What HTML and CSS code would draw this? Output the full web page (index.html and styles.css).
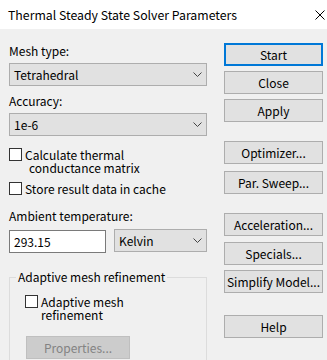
FILE: index.html
```html
<!DOCTYPE html>
<html lang="en">
<head>
    <meta charset="UTF-8">
    <meta name="viewport" content="width=device-width, initial-scale=1.0">
    <title>Thermal Steady State Solver Parameters</title>
    <link rel="stylesheet" href="styles.css">
</head>
<body>
    <div class="dialog">
        <div class="titlebar">
            <span class="title">Thermal Steady State Solver Parameters</span>
            <svg class="close-x" viewBox="0 0 10 10" width="10" height="10">
                <path d="M0.5 0.5 L9.5 9.5 M9.5 0.5 L0.5 9.5" stroke="#000" stroke-width="1" fill="none"/>
            </svg>
        </div>

        <div class="content">
            <div class="left">
                <div class="label first">Mesh type:</div>
                <div class="combo">
                    <span>Tetrahedral</span>
                    <svg class="chev" viewBox="0 0 9 5" width="9" height="5"><path d="M0.5 0.5 L4.5 4.5 L8.5 0.5" stroke="#444" fill="none"/></svg>
                </div>

                <div class="label">Accuracy:</div>
                <div class="combo">
                    <span>1e-6</span>
                    <svg class="chev" viewBox="0 0 9 5" width="9" height="5"><path d="M0.5 0.5 L4.5 4.5 L8.5 0.5" stroke="#444" fill="none"/></svg>
                </div>

                <div class="check-row calc">
                    <span class="box"></span>
                    <span class="check-text">Calculate thermal<br><span class="indent">conductance matrix</span></span>
                </div>

                <div class="check-row store">
                    <span class="box"></span>
                    <span class="check-text">Store result data in cache</span>
                </div>

                <div class="label ambient">Ambient temperature:</div>
                <div class="temp-row">
                    <div class="edit">293.15</div>
                    <div class="combo unit">
                        <span>Kelvin</span>
                        <svg class="chev" viewBox="0 0 9 5" width="9" height="5"><path d="M0.5 0.5 L4.5 4.5 L8.5 0.5" stroke="#444" fill="none"/></svg>
                    </div>
                </div>

                <fieldset class="group">
                    <legend>Adaptive mesh refinement</legend>
                    <div class="check-row adaptive">
                        <span class="box"></span>
                        <span class="check-text">Adaptive mesh<br>refinement</span>
                    </div>
                    <div class="btn disabled">Properties...</div>
                </fieldset>
            </div>

            <div class="right">
                <div class="btn default">Start</div>
                <div class="btn gap5">Close</div>
                <div class="btn gap5">Apply</div>
                <div class="btn gap19">Optimizer...</div>
                <div class="btn gap7">Par. Sweep...</div>
                <div class="btn gap19">Acceleration...</div>
                <div class="btn gap6">Specials...</div>
                <div class="btn gap5">Simplify Model...</div>
                <div class="btn gap22">Help</div>
            </div>
        </div>
    </div>
</body>
</html>
```

FILE: styles.css
```css
* {
    margin: 0;
    padding: 0;
    box-sizing: border-box;
}

body {
    font-family: "Noto Sans CJK SC", "Noto Sans", sans-serif;
    font-size: 12px;
    color: #000;
    background: #f0f0f0;
    width: 327px;
    height: 360px;
    overflow: hidden;
}

.dialog {
    width: 327px;
    height: 360px;
    background: #f0f0f0;
    overflow: hidden;
}

.titlebar {
    height: 29px;
    background: #fff;
    display: flex;
    align-items: center;
    justify-content: space-between;
    padding: 0 2px 0 8px;
    font-size: 12.3px;
}

.content {
    display: flex;
    padding-left: 9px;
}

.left {
    width: 198px;
}

.right {
    width: 99px;
    margin-left: 17px;
    padding-top: 14px;
}

.label {
    height: 16px;
    line-height: 16px;
    margin-top: 7px;
}

.label.first {
    margin-top: 14px;
}

.combo {
    height: 23px;
    margin-top: 4px;
    background: #e1e1e1;
    border: 1px solid #adadad;
    display: flex;
    align-items: center;
    justify-content: space-between;
    padding: 0 4px 0 4px;
}

.chev {
    display: block;
}

.check-row {
    display: flex;
    align-items: flex-start;
    line-height: 13px;
}

.check-row.calc {
    margin-top: 12px;
}

.check-row.store {
    margin-top: 8px;
}

.box {
    width: 13px;
    height: 13px;
    background: #fff;
    border: 1px solid #333;
    flex-shrink: 0;
    margin-right: 3px;
}

.indent {
    padding-left: 4px;
}

.label.ambient {
    margin-top: 13px;
}

.temp-row {
    display: flex;
    margin-top: 6px;
}

.edit {
    width: 97px;
    height: 23px;
    background: #fff;
    border: 1px solid #7a7a7a;
    line-height: 21px;
    padding-left: 4px;
}

.combo.unit {
    width: 93px;
    margin-top: -1px;
    margin-left: 8px;
}

.group {
    margin-top: 17px;
    border: 1px solid #dcdcdc;
    height: 120px;
    padding: 0 0 0 15px;
}

.group legend {
    margin-left: -9px;
    padding: 0 2px;
    line-height: 14px;
}

.check-row.adaptive {
    margin-top: 11px;
}

.btn {
    height: 23px;
    background: #e1e1e1;
    border: 1px solid #adadad;
    display: flex;
    align-items: center;
    justify-content: center;
}

.btn.default {
    border: 2px solid #0078d7;
}

.btn.disabled {
    width: 104px;
    background: #cccccc;
    border-color: #bfbfbf;
    color: #838383;
    margin-top: 15px;
    margin-left: 1px;
}

.gap5 { margin-top: 5px; }
.gap6 { margin-top: 6px; }
.gap7 { margin-top: 7px; }
.gap19 { margin-top: 19px; }
.gap22 { margin-top: 22px; }
```
